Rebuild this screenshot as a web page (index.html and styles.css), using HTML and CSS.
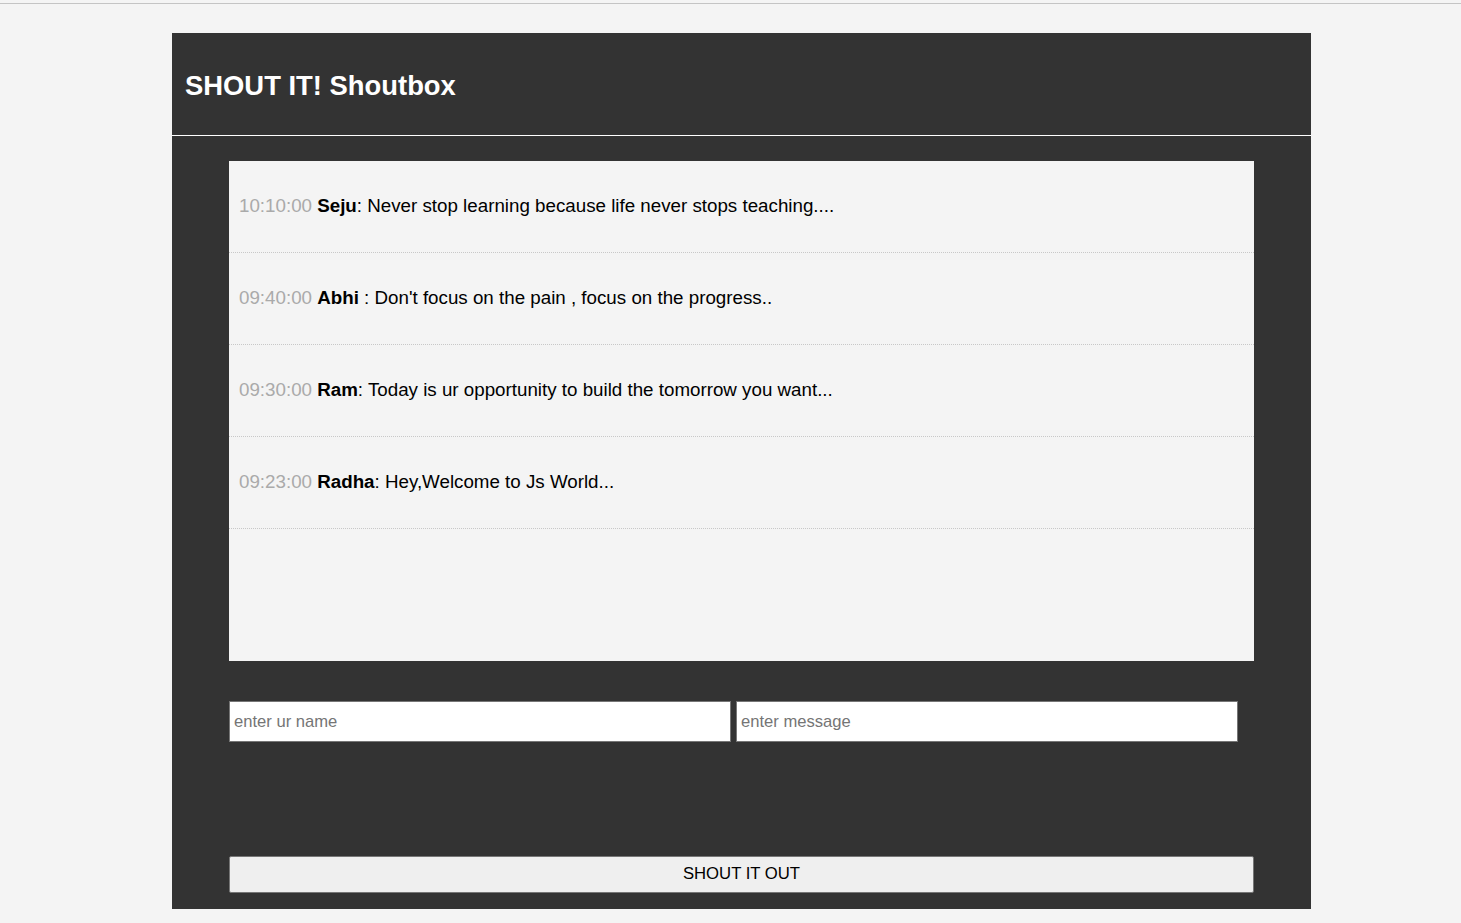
FILE: index.html
```html
<!DOCTYPE html>
<html>
<head>
<meta charset="utf-8">
<title>SHOUT IT! Shoutbox</title>
<link rel="stylesheet" href="styles.css">
</head>
<body>
<div class="topline"></div>
<div class="container">
  <header class="header">
    <h1>SHOUT IT! Shoutbox</h1>
  </header>
  <div class="main">
    <ul class="shouts">
      <li class="shout"><span class="time">10:10:00</span> <strong>Seju</strong>: Never stop learning because life never stops teaching....</li>
      <li class="shout"><span class="time">09:40:00</span> <strong>Abhi</strong> : Don't focus on the pain , focus on the progress..</li>
      <li class="shout"><span class="time">09:30:00</span> <strong>Ram</strong>: Today is ur opportunity to build the tomorrow you want...</li>
      <li class="shout"><span class="time">09:23:00</span> <strong>Radha</strong>: Hey,Welcome to Js World...</li>
    </ul>
    <form class="form">
      <div class="fields">
        <input type="text" class="field" placeholder="enter ur name">
        <input type="text" class="field" placeholder="enter message">
      </div>
      <button type="button" class="btn">SHOUT IT OUT</button>
    </form>
  </div>
</div>
</body>
</html>
```

FILE: styles.css
```css
html, body {
  margin: 0;
  padding: 0;
  background: #f4f4f4;
  font-family: "Liberation Sans", Arial, sans-serif;
}
.topline {
  height: 1px;
  margin-top: 3px;
  background: #c4c4c4;
}
.container {
  width: 1139px;
  margin: 29px 0 0 172px;
  background: #333333;
}
.header {
  box-sizing: border-box;
  height: 103px;
  padding: 3px 0 0 13px;
  border-bottom: 1px solid #ffffff;
  display: flex;
  align-items: center;
}
.header h1 {
  margin: 0;
  color: #ffffff;
  font-size: 27.4px;
  font-weight: bold;
}
.main {
  padding: 25px 57px 16px;
}
.shouts {
  list-style: none;
  margin: 0;
  padding: 0;
  height: 500px;
  background: #f4f4f4;
}
.shout {
  padding: 34px 10px 36px;
  line-height: 21px;
  font-size: 18.75px;
  color: #000;
  border-bottom: 1px dotted #c8c8c8;
}
.time {
  color: #aaaaaa;
}
.form {
  margin: 40px 0 0;
}
.fields {
  display: flex;
  gap: 5px;
}
.field {
  box-sizing: border-box;
  width: 502px;
  height: 41px;
  border: 1px solid #767676;
  padding: 0 4px;
  font-family: "Liberation Sans", Arial, sans-serif;
  font-size: 16.6px;
  background: #fff;
}
.field::placeholder {
  color: #757575;
}
.btn {
  display: block;
  box-sizing: border-box;
  width: 100%;
  height: 37px;
  margin-top: 114px;
  padding: 0 6px 1px;
  background: #efefef;
  border: 1px solid #767676;
  border-radius: 2px;
  font-family: "Liberation Sans", Arial, sans-serif;
  font-size: 16.7px;
  color: #000;
}
```
